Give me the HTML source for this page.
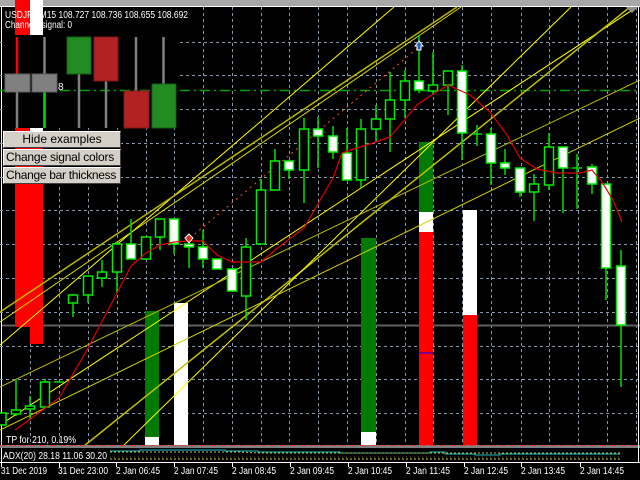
<!DOCTYPE html>
<html><head><meta charset="utf-8"><style>
html,body{margin:0;padding:0;background:#000;width:640px;height:480px;overflow:hidden}
svg{display:block}
.t{font-family:"Liberation Sans",sans-serif;fill:#fff}
.btn{position:absolute;left:3px;width:116px;height:15px;background:#d4d0c8;border:1px solid;border-color:#fff #404040 #404040 #fff;font:12px "Liberation Sans",sans-serif;color:#000;line-height:15px;box-sizing:content-box;white-space:nowrap;overflow:hidden}
</style></head><body>
<div style="position:relative;width:640px;height:480px">
<svg width="640" height="480" xmlns="http://www.w3.org/2000/svg">
<rect width="640" height="480" fill="#000"/>
<rect x="0" y="0" width="640" height="6" fill="#a8a8a8"/>
<rect x="0" y="6" width="640" height="1" fill="#fff"/>
<rect x="1" y="7" width="1" height="455" fill="#fff"/>
<g stroke="#8898a8" stroke-width="1" stroke-dasharray="3,3">
<path d="M30.5 7V446M59.5 7V446M88.5 7V446M117.5 7V446M146.5 7V446M174.5 7V446M203.5 7V446M232.5 7V446M261.5 7V446M289.5 7V446M318.5 7V446M347.5 7V446M376.5 7V446M405.5 7V446M433.5 7V446M462.5 7V446M491.5 7V446M521.5 7V446M549.5 7V446M578.5 7V446M607.5 7V446M636.5 7V446"/>
<path d="M0 42.5H640M0 75.5H640M0 109.5H640M0 143.5H640M0 177.5H640M0 210.5H640M0 244.5H640M0 278.5H640M0 312.5H640M0 346.5H640M0 379.5H640M0 413.5H640"/>
</g>
<rect x="2" y="7" width="177" height="121" fill="#000"/>
<path d="M0 90.5H640" stroke="#00a000" stroke-width="1.5" stroke-dasharray="10,4,2,4"/>
<path d="M2 325.5H640" stroke="#606060" stroke-width="2"/>
<rect x="15" y="128" width="28" height="199" fill="#f00"/>
<rect x="30" y="128" width="13" height="216" fill="#f00"/>
<rect x="30" y="128" width="13" height="3" fill="#fff"/>
<rect x="15" y="0" width="15" height="35" fill="#f00"/>
<rect x="30" y="0" width="13" height="35" fill="#fff"/>
<path d="M17 37V74" stroke="#f00" stroke-width="2.5"/><path d="M17 92V128" stroke="#808080" stroke-width="2.5"/>
<path d="M44.5 37V74" stroke="#808080" stroke-width="2.5"/><path d="M44.5 92V128" stroke="#00e000" stroke-width="2.5"/>
<rect x="5" y="74" width="25" height="18" fill="#808080" stroke="#606060"/>
<rect x="32" y="74" width="25" height="18" fill="#808080" stroke="#606060"/>
<text x="58" y="90" class="t" font-size="10">8</text>
<path d="M79 74V128M106 81V128M136 37V91M163.5 37V84" stroke="#808080" stroke-width="2.5"/>
<rect x="67" y="37" width="24" height="37" fill="#228b22" stroke="#176017"/>
<rect x="94" y="37" width="24" height="44" fill="#b22222" stroke="#801818"/>
<rect x="124" y="91" width="25" height="37" fill="#b22222" stroke="#801818"/>
<rect x="152" y="84" width="24" height="44" fill="#228b22" stroke="#176017"/>
<rect x="145" y="311" width="14" height="126" fill="#007a00"/><rect x="145" y="437" width="14" height="9" fill="#fff"/>
<rect x="174" y="303" width="14" height="143" fill="#fff"/>
<rect x="361" y="238" width="15" height="194" fill="#007a00"/><rect x="361" y="432" width="15" height="14" fill="#fff"/>
<rect x="419" y="142" width="14" height="70" fill="#007a00"/><rect x="419" y="212" width="14" height="20" fill="#fff"/><rect x="419" y="232" width="14" height="214" fill="#f00"/>
<rect x="419" y="352" width="14" height="2" fill="#800080"/>
<rect x="463" y="210" width="14" height="105" fill="#fff"/><rect x="463" y="315" width="14" height="131" fill="#f00"/>
<g stroke-width="1" fill="none">
<path d="M0 345L394 7" stroke="#ffff00"/>
<path d="M0 312L457 7" stroke="#b8b800" stroke-width="1.5"/>
<path d="M0 322L461 7" stroke="#d8d800"/>
<path d="M0 425L637 7" stroke="#ffff00"/>
<path d="M84 446L630 7" stroke="#c0c000" stroke-width="1.5"/>
<path d="M123 446L571 7" stroke="#ffff00"/>
<path d="M0 387L640 80" stroke="#b8b800"/>
<path d="M0 430L640 118" stroke="#d0d000"/>
</g>
<path d="M190 238L419 47" stroke="#ff5020" stroke-width="1" stroke-dasharray="2,4"/>
<g stroke="#00dd00" stroke-width="1.5">
<path d="M16 379V416M30 396V420M45 379V407M73 295V317M88 276V303M102 260V287M117 242V293M131 219V259M146 237V259M160 219V250M174 219V254M189 244V268M203 230V268M217 259V269M232 269V291M246 238V320M261 179V244M275 149V190M289 161V179M304 118V203M318 117V168M333 126V159M347 128V180M361 119V188M376 105V142M390 72V152M405 70V118M419 35V93M433 52V95M448 71V115M462 65V160M477 125V146M491 128V185M505 149V175M520 168V197M534 174V221M549 133V190M563 147V213M577 154V209M592 164V194M606 184V300M621 250V387"/>
<path d="M54 382H64M472 134H482M572 168H582"/>
</g>
<g stroke="#00ee00" stroke-width="1.5" fill="#000">
<rect x="-2" y="413" width="8" height="12"/>
<rect x="11.5" y="410" width="9" height="4"/>
<rect x="25.5" y="406" width="9" height="3"/>
<rect x="40.5" y="382" width="9" height="25"/>
<rect x="68.5" y="295" width="9" height="8"/>
<rect x="83.5" y="276" width="9" height="19"/>
<rect x="97.5" y="272" width="9" height="6"/>
<rect x="112.5" y="244" width="9" height="28"/>
<rect x="141.5" y="237" width="9" height="22"/>
<rect x="155.5" y="219" width="9" height="18"/>
<rect x="241.5" y="247" width="9" height="49"/>
<rect x="256.5" y="190" width="9" height="54"/>
<rect x="270.5" y="161" width="9" height="29"/>
<rect x="299.5" y="129" width="9" height="41"/>
<rect x="356.5" y="129" width="9" height="51"/>
<rect x="371.5" y="119" width="9" height="10"/>
<rect x="385.5" y="100" width="9" height="19"/>
<rect x="400.5" y="81" width="9" height="19"/>
<rect x="428.5" y="85" width="9" height="6"/>
<rect x="443.5" y="71" width="9" height="14"/>
<rect x="529.5" y="184" width="9" height="8"/>
<rect x="544.5" y="147" width="9" height="38"/>
</g>
<g stroke="#00ee00" stroke-width="1.5" fill="#fff">
<rect x="126.5" y="244" width="9" height="15"/>
<rect x="169.5" y="219" width="9" height="25"/>
<rect x="184.5" y="244" width="9" height="3"/>
<rect x="198.5" y="247" width="9" height="12"/>
<rect x="212.5" y="259" width="9" height="10"/>
<rect x="227.5" y="269" width="9" height="22"/>
<rect x="284.5" y="161" width="9" height="9"/>
<rect x="313.5" y="129" width="9" height="7"/>
<rect x="328.5" y="136" width="9" height="16"/>
<rect x="342.5" y="153" width="9" height="27"/>
<rect x="414.5" y="81" width="9" height="9"/>
<rect x="457.5" y="71" width="9" height="62"/>
<rect x="486.5" y="134" width="9" height="29"/>
<rect x="500.5" y="163" width="9" height="5"/>
<rect x="515.5" y="168" width="9" height="24"/>
<rect x="558.5" y="147" width="9" height="21"/>
<rect x="587.5" y="167" width="9" height="17"/>
<rect x="601.5" y="184" width="9" height="84"/>
<rect x="616.5" y="266" width="9" height="59"/>
</g>
<path d="M15 430L40 412L59 398L87 350L117 293L131 266L146 253L160 245L174 242L189 241L203 241L217 255L232 262L261 262L275 250L304 228L333 178L342 153L360 147L373 143L390 137L407 117L417 105L427 98L448 85L470 95L490 112L507 135L520 158L537 169L557 173L580 173L592 170L602 182L613 200L622 222" stroke="#e00000" stroke-width="1.2" fill="none"/>
<path d="M185 238L189 234L193 238L189 243Z" fill="#e03020" stroke="#fff" stroke-width="1"/>
<path d="M415 46L419 41L423 46H421V50H417V46Z" fill="#2060c0" stroke="#fff" stroke-width="1"/>
<path d="M626 7H638L632 13Z" fill="#909090"/>
<text x="5" y="18" class="t" font-size="10" textLength="183" lengthAdjust="spacingAndGlyphs">USDJPY,M15  108.727 108.736 108.655 108.692</text>
<text x="5" y="28" class="t" font-size="10" textLength="67" lengthAdjust="spacingAndGlyphs">Channels signal: 0</text>
<text x="6" y="443" class="t" font-size="10" textLength="70" lengthAdjust="spacingAndGlyphs">TP for 210, 0.19%</text>
<rect x="0" y="445" width="640" height="3" fill="#808080"/>
<path d="M0 445.5H640" stroke="#e04040" stroke-dasharray="6,4"/>
<path d="M110 451L140 451L140 450L225 450L225 451L258 451L258 452L340 452L340 453L430 453L430 452L445 452L445 454L475 454L475 455L500 455L500 454L620 454" stroke="#20c0c0" fill="none"/>
<path d="M110 452H240L260 453H620" stroke="#c0c040" stroke-dasharray="2,2" fill="none"/>
<path d="M110 459H620" stroke="#c0c040" stroke-dasharray="2,2" fill="none"/>
<path d="M110 457H620" stroke="#606020" stroke-dasharray="1,3" fill="none"/>
<text x="3" y="459" class="t" font-size="10" textLength="104" lengthAdjust="spacingAndGlyphs">ADX(20) 28.18 11.06 30.20</text>
<rect x="0" y="462" width="640" height="1" fill="#fff"/>
<rect x="638" y="7" width="1" height="456" fill="#fff"/>
<path d="M1.5 462V467M59.5 462V467M116.5 462V467M174.5 462V467M232.5 462V467M290.5 462V467M348.5 462V467M406.5 462V467M464.5 462V467M521.5 462V467M580.5 462V467" stroke="#fff"/>
<g class="t" font-size="10" lengthAdjust="spacingAndGlyphs">
<text x="1" y="474" textLength="46" lengthAdjust="spacingAndGlyphs">31 Dec 2019</text><text x="58" y="474" textLength="50" lengthAdjust="spacingAndGlyphs">31 Dec 23:00</text>
<text x="116" y="474" textLength="44" lengthAdjust="spacingAndGlyphs">2 Jan 06:45</text><text x="174" y="474" textLength="44" lengthAdjust="spacingAndGlyphs">2 Jan 07:45</text>
<text x="232" y="474" textLength="44" lengthAdjust="spacingAndGlyphs">2 Jan 08:45</text><text x="290" y="474" textLength="44" lengthAdjust="spacingAndGlyphs">2 Jan 09:45</text>
<text x="348" y="474" textLength="44" lengthAdjust="spacingAndGlyphs">2 Jan 10:45</text><text x="406" y="474" textLength="44" lengthAdjust="spacingAndGlyphs">2 Jan 11:45</text>
<text x="464" y="474" textLength="44" lengthAdjust="spacingAndGlyphs">2 Jan 12:45</text><text x="521" y="474" textLength="44" lengthAdjust="spacingAndGlyphs">2 Jan 13:45</text>
<text x="580" y="474" textLength="44" lengthAdjust="spacingAndGlyphs">2 Jan 14:45</text>
</g>
</svg>
<div class="btn" style="top:131px;text-align:center">Hide examples</div>
<div class="btn" style="top:149px;padding-left:2px;width:114px;letter-spacing:-0.2px">Change signal colors</div>
<div class="btn" style="top:167px;padding-left:2px;width:114px;letter-spacing:-0.3px">Change bar thickness</div>
</div>
</body></html>
